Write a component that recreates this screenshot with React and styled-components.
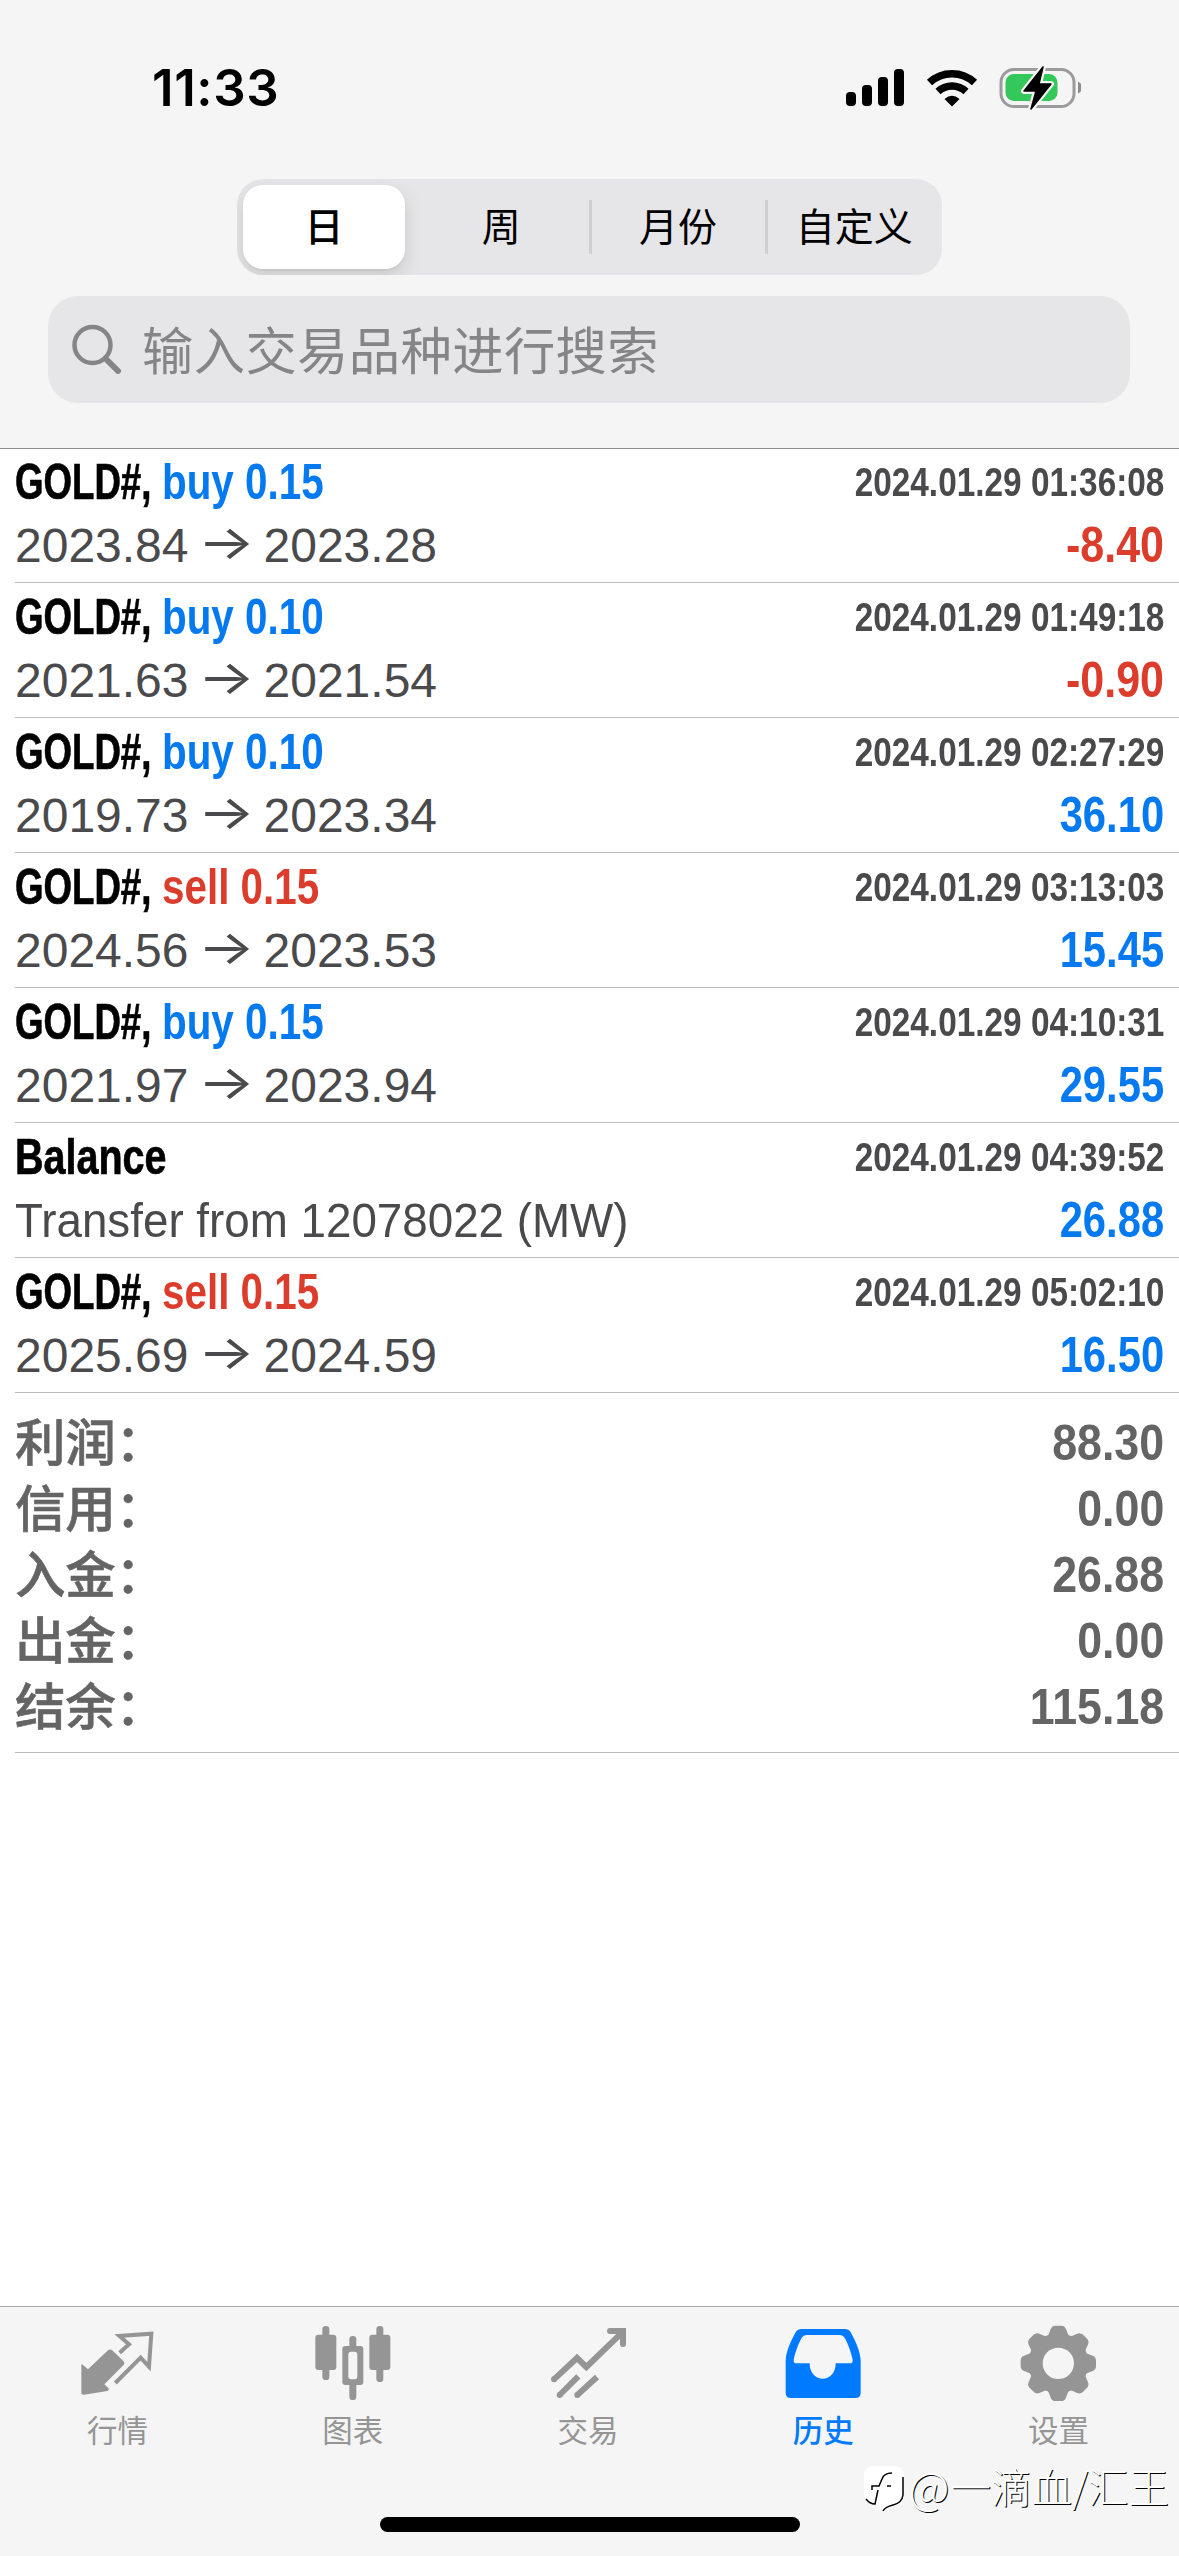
import styled, { createGlobalStyle } from 'styled-components'

const BLUE = '#057af0'
const RED = '#dc3c2c'

const GlobalStyle = createGlobalStyle`
  * {
    box-sizing: border-box;
  }

  body {
    margin: 0;
    background: #fff;
    font-family: "Liberation Sans", "Noto Sans CJK SC", sans-serif;
  }
`

const Screen = styled.div`
  position: relative;
  display: flex;
  flex-direction: column;
  width: 1179px;
  height: 2556px;
  overflow: hidden;
  background: #fff;
`

const Header = styled.header`
  height: 449px;
  background: #f5f5f5;
  border-bottom: 1px solid #8c8c8e;
`

const StatusBar = styled.div`
  display: flex;
  justify-content: space-between;
  align-items: flex-start;
  height: 179px;
  padding: 58px 98px 0 152px;
`
const Clock = styled.time`
  font: 600 51px/60px Inter, sans-serif;
  letter-spacing: .6px;
`
const StatusIcons = styled.svg`
  display: block;
  width: 240px;
  height: 60px;
`

const Segments = styled.div`
  display: grid;
  grid-template-columns: repeat(4, 1fr);
  width: 705px;
  height: 96px;
  margin: 0 auto 21px 237px;
  border-radius: 26px;
  background: #e6e6e8;
  overflow: hidden;
`
const Segment = styled.button`
  display: flex;
  align-items: center;
  justify-content: center;
  border: 0;
  padding: 0 0 1px;
  background: none;
  color: #000;
  font: ${p => (p.$active ? 500 : 400)} 39px/1 Inter, "Noto Sans CJK SC", sans-serif;
  ${p => p.$active && `
    margin: 6px 8px 6px 6px;
    border-radius: 20px;
    background: #fff;
    box-shadow: 0 8px 20px rgba(0, 0, 0, .13), 0 2px 2px rgba(0, 0, 0, .04);
  `}
`
const DividedSegment = styled(Segment)`
  margin-left: -1px;
  padding-left: 2px;
  background: linear-gradient(#cfcfd2, #cfcfd2) left center / 3px 54px no-repeat;
`

const Search = styled.label`
  display: flex;
  align-items: center;
  width: 1082px;
  height: 107px;
  margin-left: 48px;
  padding: 0 0 2px 24px;
  border-radius: 30px;
  background: #e6e6e8;
  color: #858588;
  font: 51.3px/1 "Noto Sans CJK SC", sans-serif;
  letter-spacing: .4px;

  & svg {
    width: 50px;
    height: 50px;
    margin-right: 20px;
  }

  & span {
    margin-top: -2px;
  }
`

const DealList = styled.ul`
  flex: 1;
  list-style: none;
  margin: -1px 0 0;
  padding: 0 0 0 15px;
`
const Deal = styled.li`
  height: 135px;
  padding: 3px 15px 0 0;
  border-bottom: 1px solid #bcbcc0;
`
const Line = styled.div`
  display: flex;
  justify-content: space-between;
  height: 63px;
  font-size: 48px;
  line-height: 63px;
  white-space: pre;
`
const Squeezed = styled.span`
  display: inline-block;
  transform: scaleX(${p => p.$squeeze});
  transform-origin: ${p => p.$from || 'left'} center;
`
const Condensed = styled(Squeezed)`
  font-size: 50px;
  font-weight: 700;
`
const Symbol = styled(Condensed)`
  width: ${p => (p.$wide ? 'auto' : '147px')};
  color: #000;
  -webkit-text-stroke: .7px #000;
`
const Side = styled(Condensed)`
  color: ${p => (p.$sell ? RED : BLUE)};
`
const Stamp = styled(Condensed)`
  color: #4a4a4d;
  font-size: 40px;
`
const Amount = styled(Condensed)`
  color: ${p => p.$color};
`
const Prices = styled.span`
  display: flex;
  color: #4a4a4d;
`
const Note = styled(Squeezed)`
  color: #4a4a4d;
`
const Arrow = styled.span`
  width: 75px;
  font-family: Inter, sans-serif;
  font-weight: 400;
  line-height: 55px;
  text-align: center;
  transform: scaleX(1.25);
`

const Summary = styled.li`
  height: 360px;
  padding: 17px 15px 0 0;
  border-bottom: 1px solid #bcbcc0;
`
const SummaryRow = styled.div`
  display: flex;
  justify-content: space-between;
  height: 66px;
  color: #646464;
  line-height: 66px;
`
const SummaryLabel = styled.span`
  font: 500 50.5px/59px "Noto Sans CJK SC", sans-serif;
  letter-spacing: -.3px;
  -webkit-text-stroke: .6px #646464;
`

const TabBar = styled.nav`
  display: grid;
  grid-template-columns: repeat(5, 1fr);
  height: 250px;
  padding: 18px 3px 0 0;
  background: #f5f5f5;
  border-top: 1px solid #a9a9ab;
`
const Tab = styled.a`
  display: flex;
  flex-direction: column;
  align-items: center;
  color: ${p => (p.$active ? '#007aff' : '#959595')};
  font: ${p => (p.$active ? 500 : 400)} 30.5px/44px "Noto Sans CJK SC", sans-serif;

  & svg {
    display: block;
    width: 76px;
    height: 76px;
    margin-bottom: 6px;
    overflow: visible;
  }
`
const HomeIndicator = styled.div`
  position: absolute;
  left: 380px;
  bottom: 24px;
  width: 420px;
  height: 15px;
  border-radius: 8px;
  background: #000;
`
const Watermark = styled.div`
  position: absolute;
  right: 10px;
  bottom: 40px;
  display: flex;
  align-items: center;
  color: #fff;
  font: 300 40.5px/60px "Noto Sans CJK SC", sans-serif;
  text-shadow: 1px 1px 0 #000;

  & svg {
    width: 43px;
    height: 48px;
    margin: 5px 4px 0 0;
  }
`
const At = styled.span`
  margin-right: 1px;
  font-size: 45px;
`

const deals = [
  { side: 'buy 0.15', time: '2024.01.29 01:36:08', open: '2023.84', close: '2023.28', profit: '-8.40' },
  { side: 'buy 0.10', time: '2024.01.29 01:49:18', open: '2021.63', close: '2021.54', profit: '-0.90' },
  { side: 'buy 0.10', time: '2024.01.29 02:27:29', open: '2019.73', close: '2023.34', profit: '36.10' },
  { side: 'sell 0.15', time: '2024.01.29 03:13:03', open: '2024.56', close: '2023.53', profit: '15.45' },
  { side: 'buy 0.15', time: '2024.01.29 04:10:31', open: '2021.97', close: '2023.94', profit: '29.55' },
  { time: '2024.01.29 04:39:52', note: 'Transfer from 12078022 (MW)', profit: '26.88' },
  { side: 'sell 0.15', time: '2024.01.29 05:02:10', open: '2025.69', close: '2024.59', profit: '16.50' },
]

const totals = [
  ['利润：', '88.30'],
  ['信用：', '0.00'],
  ['入金：', '26.88'],
  ['出金：', '0.00'],
  ['结余：', '115.18'],
]

const QuotesIcon = () => (
  <svg viewBox="0 0 228 228" fill="currentColor">
    <path d="M4 120 Q4 116 8 119 L24 133 L84 76 Q91 70 98 77 L130 108 Q136 115 130 121 L73 178 L85 189 Q89 196 82 198 L12 209 Q4 210 4 203Z" />
    <path d="M119 83 L147 58 L118 33 L214 26 L207 125 L182 98 L106 174" fill="none" stroke="currentColor" strokeWidth="12" />
  </svg>
)

const ChartIcon = () => (
  <svg viewBox="0 0 228 228" fill="currentColor">
    <rect x="22" y="3" width="21" height="162" rx="10" />
    <rect x="1" y="29" width="63" height="106" rx="9" />
    <rect x="184" y="3" width="21" height="168" rx="10" />
    <rect x="163" y="29" width="63" height="106" rx="9" />
    <rect x="103" y="33" width="21" height="45" rx="10" />
    <rect x="103" y="165" width="21" height="60" rx="10" />
    <path fillRule="evenodd" d="M91 63 H136 Q145 63 145 72 V171 Q145 180 136 180 H91 Q82 180 82 171 V72 Q82 63 91 63Z M108 80 Q100 80 100 89 V154 Q100 163 108 163 H119 Q127 163 127 154 V89 Q127 80 119 80Z" />
  </svg>
)

const TradeIcon = () => (
  <svg viewBox="0 0 228 228" fill="none" stroke="currentColor" strokeWidth="18" strokeLinejoin="miter">
    <circle cx="12" cy="163" r="9" fill="currentColor" stroke="none" />
    <path d="M12 163 L81 99 L109 126 L216 23" />
    <path d="M180 18 H219 V57" strokeLinecap="round" />
    <circle cx="29" cy="210" r="9" fill="currentColor" stroke="none" />
    <circle cx="82" cy="210" r="9" fill="currentColor" stroke="none" />
    <path d="M29 210 L85 154 M82 210 L141 156" />
  </svg>
)

const HistoryIcon = () => (
  <svg viewBox="0 0 228 228" fill="currentColor">
    <path fillRule="evenodd" d="M50 12 H179 Q191 12 197 22 C212 48 227 84 227 108 V203 Q227 219 211 219 H18 Q2 219 2 203 V108 C2 84 17 48 32 22 Q38 12 50 12Z M64 30 Q55 30 50 38 C40 56 30 84 26 104 Q25 115 34 115 H74 C74 177 152 177 152 115 H195 Q204 115 203 104 C199 84 189 56 179 38 Q174 30 165 30Z" />
  </svg>
)

const GearIcon = () => (
  <svg viewBox="0 0 228 228" fill="currentColor">
    <mask id="hub">
      <rect width="228" height="228" fill="#fff" />
      <circle cx="115" cy="115" r="47" fill="#000" />
    </mask>
    <g mask="url(#hub)">
      <circle cx="115" cy="115" r="90" />
      {[0, 45, 90, 135, 180, 225, 270, 315].map(a => (
        <path key={a} transform={`rotate(${a} 115 115)`} d="M77 40 C85 34 88 22 92 12 Q96 2 107 2 H123 Q134 2 138 12 C142 22 145 34 153 40Z" />
      ))}
    </g>
  </svg>
)

const tabs = [
  ['行情', QuotesIcon],
  ['图表', ChartIcon],
  ['交易', TradeIcon],
  ['历史', HistoryIcon],
  ['设置', GearIcon],
]

function App() {
  return (
    <Screen>
      <GlobalStyle />
      <Header>
        <StatusBar>
          <Clock>11:33</Clock>
          <StatusIcons viewBox="0 0 240 60">
            <rect x="5" y="34" width="10" height="14" rx="4" />
            <rect x="21" y="27" width="10" height="21" rx="4" />
            <rect x="37" y="19" width="10" height="29" rx="4" />
            <rect x="53" y="11" width="10" height="37" rx="4" />
            <g fill="none" stroke="#000" strokeWidth="7.5">
              <path d="M88.500 24.500 a33 33 0 0 1 45 0" />
              <path d="M97 33.500 a20.500 20.500 0 0 1 28 0" />
            </g>
            <path d="M103.500 41 Q111 34.500 118.500 41 L111 48.500Z" />
            <rect x="160" y="11.500" width="73" height="37" rx="13" fill="none" stroke="#9c9a9c" strokeWidth="3" />
            <rect x="164.500" y="16" width="52" height="27" rx="8.500" fill="#34c759" />
            <path d="M237 23.500 q4 2 4 6 t-4 6z" fill="#8c8c8c" />
            <path d="M202 9 L183 33 H195 L190 51 L210 26 H198Z" stroke="#f5f5f5" strokeWidth="6" strokeLinejoin="round" />
            <path d="M202 9 L183 33 H195 L190 51 L210 26 H198Z" stroke="#000" strokeWidth="1.500" strokeLinejoin="round" />
          </StatusIcons>
        </StatusBar>
        <Segments>
          <Segment $active>日</Segment>
          <Segment>周</Segment>
          <DividedSegment>月份</DividedSegment>
          <DividedSegment>自定义</DividedSegment>
        </Segments>
        <Search>
          <svg viewBox="0 0 50 50" fill="none" stroke="currentColor">
            <circle cx="20.500" cy="21" r="18" strokeWidth="4.500" />
            <path d="M33.500 34.500 L46 47" strokeWidth="6" strokeLinecap="round" />
          </svg>
          <span>输入交易品种进行搜索</span>
        </Search>
      </Header>

      <DealList>
        {deals.map(deal => {
          const loss = deal.profit.startsWith('-')
          return (
            <Deal key={deal.time}>
              <Line>
                <span>
                  {deal.note
                    ? <Symbol $wide $squeeze={.79}>Balance</Symbol>
                    : <Symbol $squeeze={.733}>GOLD#,</Symbol>}
                  {deal.side && <Side $squeeze={.808} $sell={deal.side.startsWith('sell')}>{deal.side}</Side>}
                </span>
                <Stamp $squeeze={.834} $from="right">{deal.time}</Stamp>
              </Line>
              <Line>
                {deal.note
                  ? <Note $squeeze={.953}>{deal.note}</Note>
                  : <Prices>{deal.open}<Arrow>→</Arrow>{deal.close}</Prices>}
                <Amount $squeeze={loss ? .86 : .835} $from="right" $color={loss ? RED : BLUE}>{deal.profit}</Amount>
              </Line>
            </Deal>
          )
        })}
        <Summary>
          {totals.map(([label, value]) => (
            <SummaryRow key={label}>
              <SummaryLabel>{label}</SummaryLabel>
              <Condensed $squeeze={.895} $from="right">{value}</Condensed>
            </SummaryRow>
          ))}
        </Summary>
      </DealList>

      <TabBar>
        {tabs.map(([label, Icon]) => (
          <Tab key={label} $active={label === '历史'}>
            <Icon />
            {label}
          </Tab>
        ))}
      </TabBar>
      <HomeIndicator />
      <Watermark>
        <svg viewBox="0 0 43 48">
          <path d="M10 1 H31 Q42 1 42 12 V30 Q42 40 31 41 L21 47 L17 41 Q4 38 2 30 V10 Q3 1 10 1Z" fill="#fff" />
          <path d="M30 8 Q22 8 20 14 L17 21 H10 V25 M16 25 L13 39 Q8 39 4 34 M25 21 H29 M41 12 V30 Q40 38 31 40 Q23 42 21 46" fill="none" stroke="#000" strokeWidth="1.500" />
        </svg>
        <At>@</At>
        <span>一滴血/汇王</span>
      </Watermark>
    </Screen>
  )
}

export default App
